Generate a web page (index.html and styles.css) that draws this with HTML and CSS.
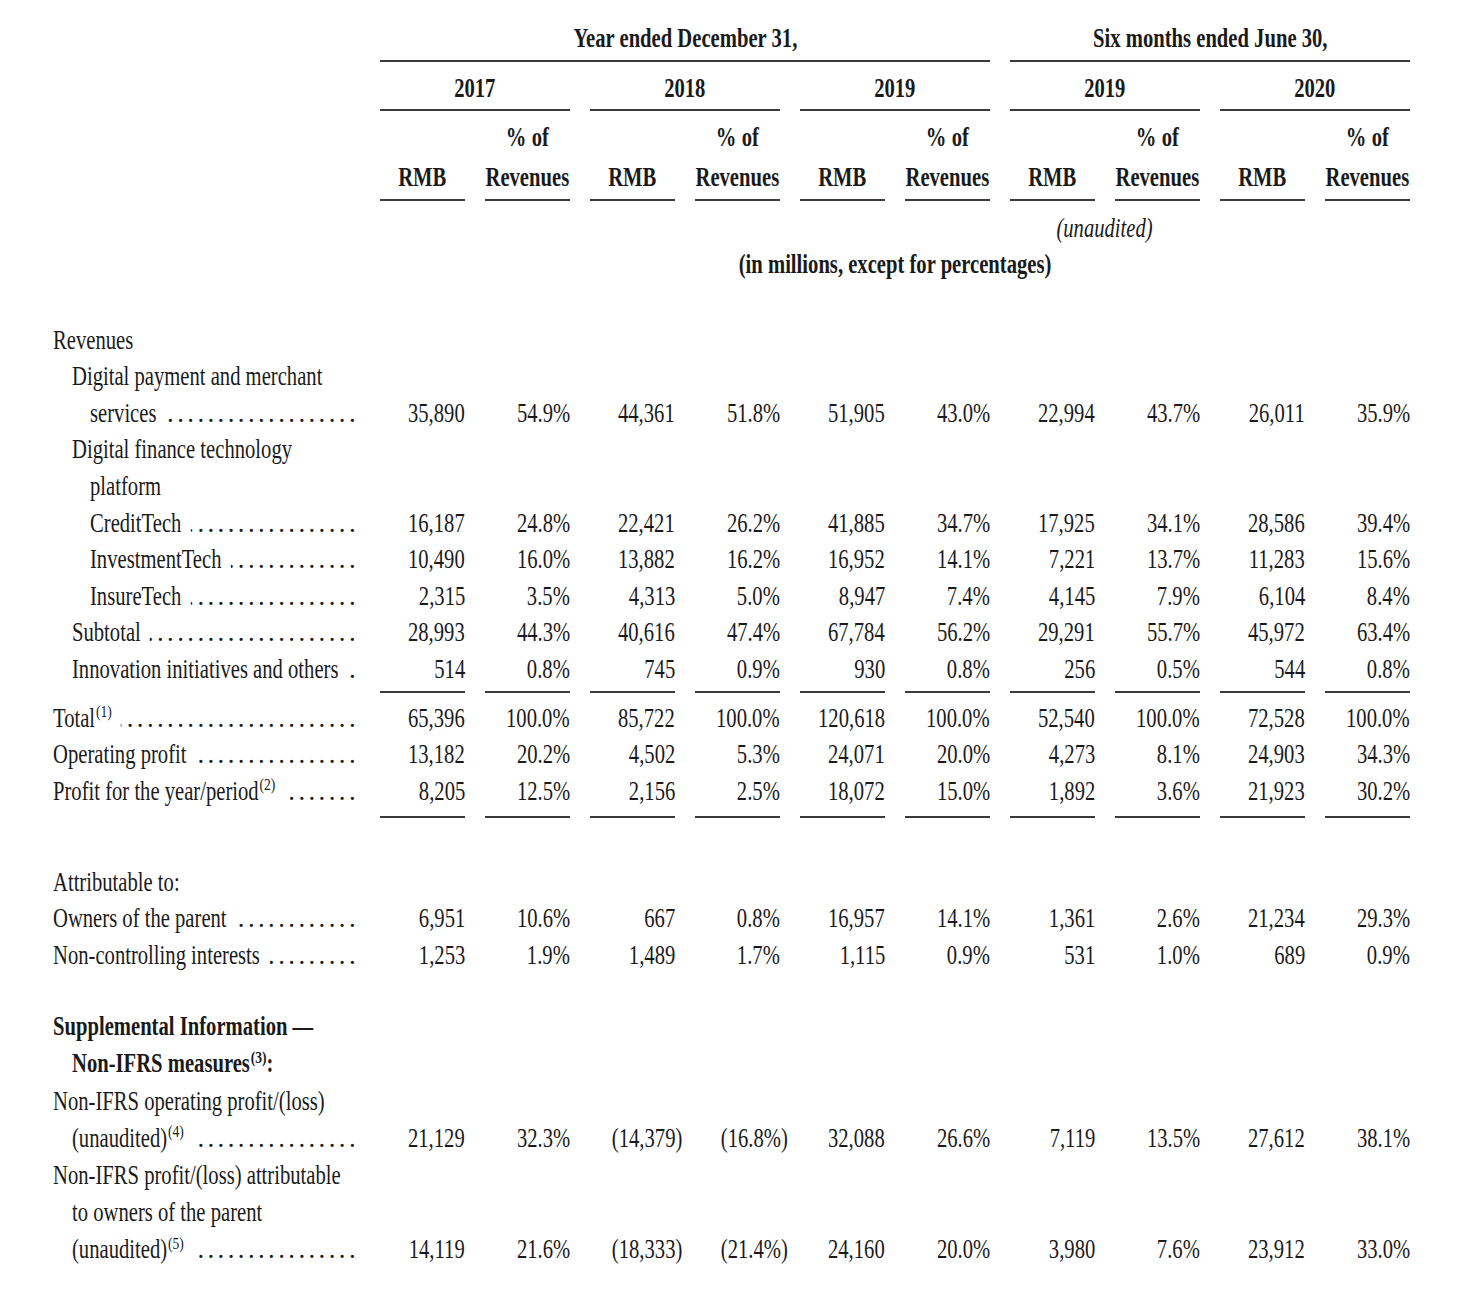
FILE: index.html
```html
<!DOCTYPE html>
<html lang="en">
<head>
<meta charset="utf-8">
<title>Selected financial data</title>
<link rel="stylesheet" href="styles.css">
</head>
<body>
<div class="page">
  <div class="r h1">
    <div class="lbl"></div>
    <div class="c span6"><span class="x">Year ended December 31,</span></div>
    <div class="c span4"><span class="x">Six months ended June 30,</span></div>
  </div>
  <div class="r h2">
    <div class="lbl"></div>
    <div class="c span2"><span class="x">2017</span></div>
    <div class="c span2"><span class="x">2018</span></div>
    <div class="c span2"><span class="x">2019</span></div>
    <div class="c span2"><span class="x">2019</span></div>
    <div class="c span2"><span class="x">2020</span></div>
  </div>
  <div class="r h3">
    <div class="lbl"></div>
    <div class="c rmb"><span class="x">RMB</span></div><div class="c"><span class="x">% of<br>Revenues</span></div>
    <div class="c rmb"><span class="x">RMB</span></div><div class="c"><span class="x">% of<br>Revenues</span></div>
    <div class="c rmb"><span class="x">RMB</span></div><div class="c"><span class="x">% of<br>Revenues</span></div>
    <div class="c rmb"><span class="x">RMB</span></div><div class="c"><span class="x">% of<br>Revenues</span></div>
    <div class="c rmb"><span class="x">RMB</span></div><div class="c"><span class="x">% of<br>Revenues</span></div>
  </div>
  <div class="r h4">
    <div class="lbl"></div>
    <div class="c unaud"><span class="x">(unaudited)</span></div>
  </div>
  <div class="r h5">
    <div class="lbl"></div>
    <div class="c mill"><span class="x">(in millions, except for percentages)</span></div>
  </div>

  <div class="r d first">
    <div class="lbl"><span class="x t">Revenues</span></div>
  </div>
  <div class="r d">
    <div class="lbl i1"><span class="x t">Digital payment and merchant</span></div>
  </div>
  <div class="r d">
    <div class="lbl i2"><span class="x t">services</span><span class="dl"></span></div>
    <div class="v"><span class="x">35,890</span></div><div class="v"><span class="x">54.9%</span></div>
    <div class="v"><span class="x">44,361</span></div><div class="v"><span class="x">51.8%</span></div>
    <div class="v"><span class="x">51,905</span></div><div class="v"><span class="x">43.0%</span></div>
    <div class="v"><span class="x">22,994</span></div><div class="v"><span class="x">43.7%</span></div>
    <div class="v"><span class="x">26,011</span></div><div class="v"><span class="x">35.9%</span></div>
  </div>
  <div class="r d">
    <div class="lbl i1"><span class="x t">Digital finance technology</span></div>
  </div>
  <div class="r d">
    <div class="lbl i2"><span class="x t">platform</span></div>
  </div>
  <div class="r d">
    <div class="lbl i2"><span class="x t">CreditTech</span><span class="dl"></span></div>
    <div class="v"><span class="x">16,187</span></div><div class="v"><span class="x">24.8%</span></div>
    <div class="v"><span class="x">22,421</span></div><div class="v"><span class="x">26.2%</span></div>
    <div class="v"><span class="x">41,885</span></div><div class="v"><span class="x">34.7%</span></div>
    <div class="v"><span class="x">17,925</span></div><div class="v"><span class="x">34.1%</span></div>
    <div class="v"><span class="x">28,586</span></div><div class="v"><span class="x">39.4%</span></div>
  </div>
  <div class="r d">
    <div class="lbl i2"><span class="x t">InvestmentTech</span><span class="dl"></span></div>
    <div class="v"><span class="x">10,490</span></div><div class="v"><span class="x">16.0%</span></div>
    <div class="v"><span class="x">13,882</span></div><div class="v"><span class="x">16.2%</span></div>
    <div class="v"><span class="x">16,952</span></div><div class="v"><span class="x">14.1%</span></div>
    <div class="v"><span class="x">7,221</span></div><div class="v"><span class="x">13.7%</span></div>
    <div class="v"><span class="x">11,283</span></div><div class="v"><span class="x">15.6%</span></div>
  </div>
  <div class="r d">
    <div class="lbl i2"><span class="x t">InsureTech</span><span class="dl"></span></div>
    <div class="v"><span class="x">2,315</span></div><div class="v"><span class="x">3.5%</span></div>
    <div class="v"><span class="x">4,313</span></div><div class="v"><span class="x">5.0%</span></div>
    <div class="v"><span class="x">8,947</span></div><div class="v"><span class="x">7.4%</span></div>
    <div class="v"><span class="x">4,145</span></div><div class="v"><span class="x">7.9%</span></div>
    <div class="v"><span class="x">6,104</span></div><div class="v"><span class="x">8.4%</span></div>
  </div>
  <div class="r d">
    <div class="lbl i1"><span class="x t">Subtotal</span><span class="dl"></span></div>
    <div class="v"><span class="x">28,993</span></div><div class="v"><span class="x">44.3%</span></div>
    <div class="v"><span class="x">40,616</span></div><div class="v"><span class="x">47.4%</span></div>
    <div class="v"><span class="x">67,784</span></div><div class="v"><span class="x">56.2%</span></div>
    <div class="v"><span class="x">29,291</span></div><div class="v"><span class="x">55.7%</span></div>
    <div class="v"><span class="x">45,972</span></div><div class="v"><span class="x">63.4%</span></div>
  </div>
  <div class="r d ul1">
    <div class="lbl i1"><span class="x t">Innovation initiatives and others</span><span class="dl"></span></div>
    <div class="v"><span class="x">514</span></div><div class="v"><span class="x">0.8%</span></div>
    <div class="v"><span class="x">745</span></div><div class="v"><span class="x">0.9%</span></div>
    <div class="v"><span class="x">930</span></div><div class="v"><span class="x">0.8%</span></div>
    <div class="v"><span class="x">256</span></div><div class="v"><span class="x">0.5%</span></div>
    <div class="v"><span class="x">544</span></div><div class="v"><span class="x">0.8%</span></div>
  </div>

  <div class="r d total">
    <div class="lbl"><span class="x t">Total<sup>(1)</sup></span><span class="dl"></span></div>
    <div class="v"><span class="x">65,396</span></div><div class="v"><span class="x">100.0%</span></div>
    <div class="v"><span class="x">85,722</span></div><div class="v"><span class="x">100.0%</span></div>
    <div class="v"><span class="x">120,618</span></div><div class="v"><span class="x">100.0%</span></div>
    <div class="v"><span class="x">52,540</span></div><div class="v"><span class="x">100.0%</span></div>
    <div class="v"><span class="x">72,528</span></div><div class="v"><span class="x">100.0%</span></div>
  </div>
  <div class="r d">
    <div class="lbl"><span class="x t">Operating profit</span><span class="dl"></span></div>
    <div class="v"><span class="x">13,182</span></div><div class="v"><span class="x">20.2%</span></div>
    <div class="v"><span class="x">4,502</span></div><div class="v"><span class="x">5.3%</span></div>
    <div class="v"><span class="x">24,071</span></div><div class="v"><span class="x">20.0%</span></div>
    <div class="v"><span class="x">4,273</span></div><div class="v"><span class="x">8.1%</span></div>
    <div class="v"><span class="x">24,903</span></div><div class="v"><span class="x">34.3%</span></div>
  </div>
  <div class="r d ul2">
    <div class="lbl"><span class="x t">Profit for the year/period<sup>(2)</sup></span><span class="dl"></span></div>
    <div class="v"><span class="x">8,205</span></div><div class="v"><span class="x">12.5%</span></div>
    <div class="v"><span class="x">2,156</span></div><div class="v"><span class="x">2.5%</span></div>
    <div class="v"><span class="x">18,072</span></div><div class="v"><span class="x">15.0%</span></div>
    <div class="v"><span class="x">1,892</span></div><div class="v"><span class="x">3.6%</span></div>
    <div class="v"><span class="x">21,923</span></div><div class="v"><span class="x">30.2%</span></div>
  </div>

  <div class="r d attr">
    <div class="lbl"><span class="x t">Attributable to:</span></div>
  </div>
  <div class="r d">
    <div class="lbl"><span class="x t">Owners of the parent</span><span class="dl"></span></div>
    <div class="v"><span class="x">6,951</span></div><div class="v"><span class="x">10.6%</span></div>
    <div class="v"><span class="x">667</span></div><div class="v"><span class="x">0.8%</span></div>
    <div class="v"><span class="x">16,957</span></div><div class="v"><span class="x">14.1%</span></div>
    <div class="v"><span class="x">1,361</span></div><div class="v"><span class="x">2.6%</span></div>
    <div class="v"><span class="x">21,234</span></div><div class="v"><span class="x">29.3%</span></div>
  </div>
  <div class="r d">
    <div class="lbl"><span class="x t">Non-controlling interests</span><span class="dl"></span></div>
    <div class="v"><span class="x">1,253</span></div><div class="v"><span class="x">1.9%</span></div>
    <div class="v"><span class="x">1,489</span></div><div class="v"><span class="x">1.7%</span></div>
    <div class="v"><span class="x">1,115</span></div><div class="v"><span class="x">0.9%</span></div>
    <div class="v"><span class="x">531</span></div><div class="v"><span class="x">1.0%</span></div>
    <div class="v"><span class="x">689</span></div><div class="v"><span class="x">0.9%</span></div>
  </div>

  <div class="sup-sec">
    <div class="r s">
      <div class="lbl b"><span class="x t">Supplemental Information —</span></div>
    </div>
    <div class="r s">
      <div class="lbl i1 b"><span class="x t">Non-IFRS measures<sup>(3)</sup>:</span></div>
    </div>
    <div class="r s">
      <div class="lbl"><span class="x t">Non-IFRS operating profit/(loss)</span></div>
    </div>
    <div class="r s">
      <div class="lbl i1"><span class="x t">(unaudited)<sup>(4)</sup></span><span class="dl"></span></div>
      <div class="v"><span class="x">21,129</span></div><div class="v"><span class="x">32.3%</span></div>
      <div class="v"><span class="x">(14,379<span class="rp">)</span></span></div><div class="v"><span class="x">(16.8%<span class="rp">)</span></span></div>
      <div class="v"><span class="x">32,088</span></div><div class="v"><span class="x">26.6%</span></div>
      <div class="v"><span class="x">7,119</span></div><div class="v"><span class="x">13.5%</span></div>
      <div class="v"><span class="x">27,612</span></div><div class="v"><span class="x">38.1%</span></div>
    </div>
    <div class="r s">
      <div class="lbl"><span class="x t">Non-IFRS profit/(loss) attributable</span></div>
    </div>
    <div class="r s">
      <div class="lbl i1"><span class="x t">to owners of the parent</span></div>
    </div>
    <div class="r s">
      <div class="lbl i1"><span class="x t">(unaudited)<sup>(5)</sup></span><span class="dl"></span></div>
      <div class="v"><span class="x">14,119</span></div><div class="v"><span class="x">21.6%</span></div>
      <div class="v"><span class="x">(18,333<span class="rp">)</span></span></div><div class="v"><span class="x">(21.4%<span class="rp">)</span></span></div>
      <div class="v"><span class="x">24,160</span></div><div class="v"><span class="x">20.0%</span></div>
      <div class="v"><span class="x">3,980</span></div><div class="v"><span class="x">7.6%</span></div>
      <div class="v"><span class="x">23,912</span></div><div class="v"><span class="x">33.0%</span></div>
    </div>
  </div>
</div>
</body>
</html>
```

FILE: styles.css
```css
:root {
  --s: 0.77;
  --ink: #1a1a1a;
  --rule: #3a3a3a;
}

html, body {
  margin: 0;
  padding: 0;
  background: #ffffff;
}

.page {
  padding: 20px 0 0 53px;
  font-family: "Liberation Serif", "Times New Roman", serif;
  font-size: 26.8px;
  color: var(--ink);
}

.r {
  display: grid;
  grid-template-columns: 307px repeat(10, 85px);
  column-gap: 20px;
  line-height: 36.6px;
}

/* condensed face: the serif is narrowed horizontally */
.x {
  display: inline-block;
  white-space: nowrap;
  transform: scaleX(var(--s));
}

/* ---------- header ---------- */
.c {
  display: flex;
  justify-content: center;
  min-width: 0;
  font-weight: bold;
}

.c .x {
  text-align: center;
  transform-origin: 50% 50%;
}

.span6 { grid-column: 2 / span 6; }
.span4 { grid-column: 8 / span 4; }
.span2 { grid-column: span 2; }

.h1 .c {
  padding-bottom: 3px;
  border-bottom: 2px solid var(--rule);
}

.h2 .c {
  padding-top: 8px;
  padding-bottom: 3px;
  border-bottom: 2px solid var(--rule);
}

.h3 .c {
  line-height: 40px;
  padding-top: 6px;
  padding-bottom: 2px;
  border-bottom: 2px solid var(--rule);
}

.h3 .c.rmb {
  padding-top: 46px;
}

.h4 { margin-top: 8.5px; }

.c.unaud {
  grid-column: 8 / span 2;
  font-weight: normal;
  font-style: italic;
}

.c.mill {
  grid-column: 2 / span 10;
}

/* ---------- label column with leader dots ---------- */
.lbl {
  display: grid;
  grid-template-columns: minmax(0, 1fr);
  min-width: 0;
}

.lbl > * {
  grid-area: 1 / 1;
}

.lbl.i1 { padding-left: 19px; }
.lbl.i2 { padding-left: 37px; }
.lbl.b { font-weight: bold; }

.t {
  justify-self: start;
  transform-origin: 0 50%;
  background: #ffffff;
  padding-right: 12px;
}

.dl {
  justify-self: end;
  white-space: nowrap;
  letter-spacing: 3.4px;
  padding-right: 1px;
}

.dl::before {
  content: "..........................";
}

sup {
  font-size: 0.66em;
  line-height: 0;
  vertical-align: 0.55em;
  margin-left: 1px;
}

/* ---------- values ---------- */
.v {
  display: flex;
  justify-content: flex-end;
  min-width: 0;
}

.v .x {
  transform-origin: 100% 50%;
}

.rp {
  margin-right: -0.36em;
}

.d.first { margin-top: 38.8px; }

.ul1 .v {
  padding-bottom: 3.5px;
  border-bottom: 2px solid var(--rule);
}

.total { margin-top: 6.5px; }

.ul2 .v {
  padding-bottom: 6.5px;
  border-bottom: 2px solid var(--rule);
}

.attr { margin-top: 45.7px; }

.sup-sec { margin-top: 34.9px; }

.s { line-height: 37.2px; }
```
